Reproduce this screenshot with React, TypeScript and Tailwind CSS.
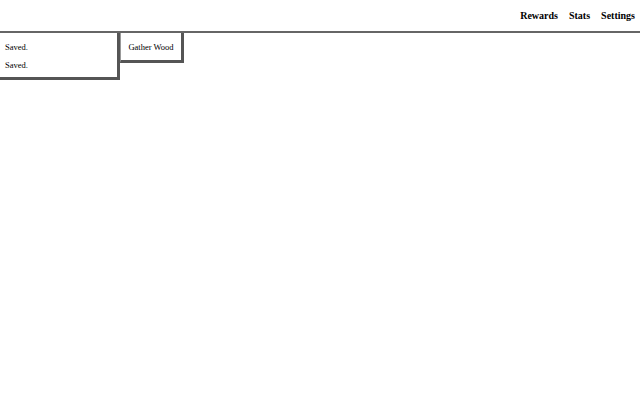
export default function App() {
  const serif = { fontFamily: '"Liberation Serif", "Times New Roman", serif' };
  return (
    <div className="h-[400px] w-[640px] bg-white text-black" style={serif}>
      <header className="flex h-[33px] items-center justify-end gap-[11px] border-b-2 border-[#666] pr-[5px]">
        <span className="text-[10px] font-bold">Rewards</span>
        <span className="text-[10px] font-bold">Stats</span>
        <span className="text-[10px] font-bold">Settings</span>
      </header>
      <div className="flex items-start">
        <div className="flex h-[47px] w-[120px] flex-col gap-[9px] border-r-[3px] border-b-[3px] border-[#555] px-[5px] pt-[10px] text-[8.5px] leading-[9px]">
          <div>Saved.</div>
          <div>Saved.</div>
        </div>
        <button className="flex h-[30px] w-[64px] items-center justify-center border-l border-l-[#999] border-r-[3px] border-b-[3px] border-[#555] pt-[2px] text-[8.5px]">
          Gather Wood
        </button>
      </div>
    </div>
  );
}
